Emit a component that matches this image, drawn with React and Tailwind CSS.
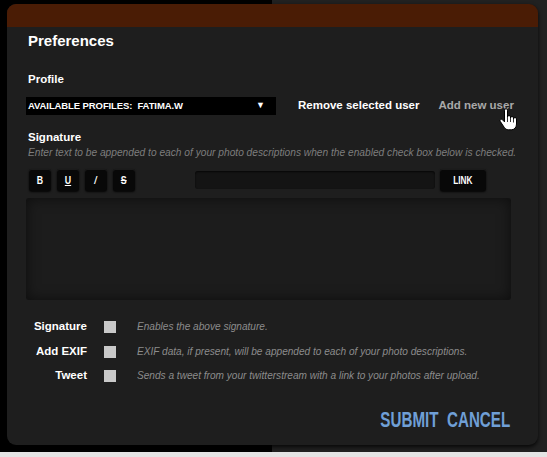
import React from "react";

const font = "font-['Liberation_Sans',Arial,sans-serif]";

function ToolButton({ children, className = "" }) {
    return (
        <div
            className={`w-[22px] h-[22px] rounded-[3px] bg-[#080808] shadow-[0_1px_2px_rgba(0,0,0,0.9),inset_0_1px_0_rgba(255,255,255,0.08)] flex items-center justify-center text-white text-[11px] font-bold ${className}`}
        >
            <span className="inline-block scale-x-[0.8]">{children}</span>
        </div>
    );
}

function Hand() {
    return (
        <svg width="18" height="23" viewBox="0 0 18 23" className="absolute left-[499px] top-[108px]">
            <path
                d="M5.5 2.2a1.5 1.5 0 0 1 3 0V9a1.5 1.5 0 0 1 3 0v1a1.5 1.5 0 0 1 3 0v1a1.5 1.5 0 0 1 3 0v5c0 3.3-2 5.8-5.2 5.8H9.4c-2 0-3.2-1-4.3-2.6L1.4 13.6a1.4 1.4 0 0 1 2.2-1.8l1.9 2.1Z"
                fill="#fff"
                stroke="#000"
                strokeWidth="1"
                strokeLinejoin="round"
            />
            <path d="M8.5 9v5M11.5 10v4M14.5 11v3.5" stroke="#000" strokeWidth="0.8" />
        </svg>
    );
}

function OptionRow({ label, text, className = "" }) {
    return (
        <div className={`flex items-center h-[16px] ${className}`}>
            <div className="w-[61px] text-right text-white text-[11.5px] font-bold">{label}</div>
            <div className="ml-[17px] w-[12px] h-[12px] bg-[#c9c9c9]" />
            <div className="ml-[21px] text-[10.1px] italic text-[#8c8c8c] whitespace-nowrap">{text}</div>
        </div>
    );
}

export default function App() {
    return (
        <div
            className={`relative w-[547px] h-[457px] overflow-hidden bg-[linear-gradient(to_right,#000_0px,#000_272px,#212121_272px)] pt-[4px] pl-[7px] ${font}`}
        >
            <div className="absolute left-0 right-0 bottom-0 h-[5px] bg-[#e4e4e4]" />

            <div className="relative w-[531px] h-[441px] rounded-[9px] bg-[#1e1e1e] overflow-hidden shadow-[0_2px_4px_rgba(0,0,0,0.8)] flex flex-col">
                <div className="h-[23px] bg-[#4a1c05] shrink-0" />

                <div className="px-[19px] flex flex-col">
                    <h1 className="mt-[5px] pl-[2px] text-[15px] leading-[18px] font-bold text-white">Preferences</h1>

                    <div className="mt-[22px] pl-[2px] text-[11.5px] leading-[14px] font-bold text-white">Profile</div>

                    <div className="mt-[11px] flex items-center">
                        <div className="w-[250px] h-[18px] bg-black flex items-center justify-between pl-[2px] pr-[11px]">
                            <span className="text-white text-[9.5px] font-bold tracking-[-0.1px] whitespace-pre">
                                AVAILABLE PROFILES:  FATIMA.W
                            </span>
                            <span className="text-white text-[9px]">▼</span>
                        </div>
                        <span className="ml-[22px] text-white text-[11.5px] font-bold">Remove selected user</span>
                        <span className="ml-[19px] text-[#a9a9a9] text-[11.5px] font-bold">Add new user</span>
                    </div>

                    <div className="mt-[15px] pl-[2px] text-[11.5px] leading-[14px] font-bold text-white">Signature</div>
                    <div className="mt-[3px] pl-[2px] text-[10.2px] leading-[12px] italic text-[#7d7d7d] whitespace-nowrap">
                        Enter text to be appended to each of your photo descriptions when the enabled check box below is checked.
                    </div>

                    <div className="mt-[10px] flex items-center">
                        <div className="ml-[3px] flex gap-[6px]">
                            <ToolButton>B</ToolButton>
                            <ToolButton>
                                <span className="underline">U</span>
                            </ToolButton>
                            <ToolButton>
                                <span className="italic">/</span>
                            </ToolButton>
                            <ToolButton>
                                <span className="line-through">S</span>
                            </ToolButton>
                        </div>
                        <div className="ml-[60px] w-[240px] h-[18px] rounded-[3px] bg-[#141414] shadow-[inset_0_1px_2px_rgba(0,0,0,0.7)]" />
                        <div className="ml-[5px] w-[46px] h-[22px] rounded-[3px] bg-[#080808] shadow-[0_1px_2px_rgba(0,0,0,0.9),inset_0_1px_0_rgba(255,255,255,0.08)] flex items-center justify-center">
                            <span className="text-white text-[11px] font-bold inline-block scale-x-[0.75]">LINK</span>
                        </div>
                    </div>

                    <div className="mt-[7px] w-[485px] h-[102px] rounded-[3px] bg-[#1c1c1c] shadow-[inset_0_0_14px_rgba(0,0,0,0.55)]" />

                    <OptionRow className="mt-[19px]" label="Signature" text="Enables the above signature." />
                    <OptionRow
                        className="mt-[9px]"
                        label="Add EXIF"
                        text="EXIF data, if present, will be appended to each of your photo descriptions."
                    />
                    <OptionRow
                        className="mt-[8px]"
                        label="Tweet"
                        text="Sends a tweet from your twitterstream with a link to your photos after upload."
                    />

                    <div className="mt-[25px] flex justify-end pr-[9px]">
                        <div className="inline-block origin-right scale-x-[0.69] whitespace-nowrap text-[22px] leading-[22px] font-bold text-[#6f9fd6]">
                            SUBMIT&nbsp;&nbsp;CANCEL
                        </div>
                    </div>
                </div>
            </div>

            <Hand />
        </div>
    );
}
